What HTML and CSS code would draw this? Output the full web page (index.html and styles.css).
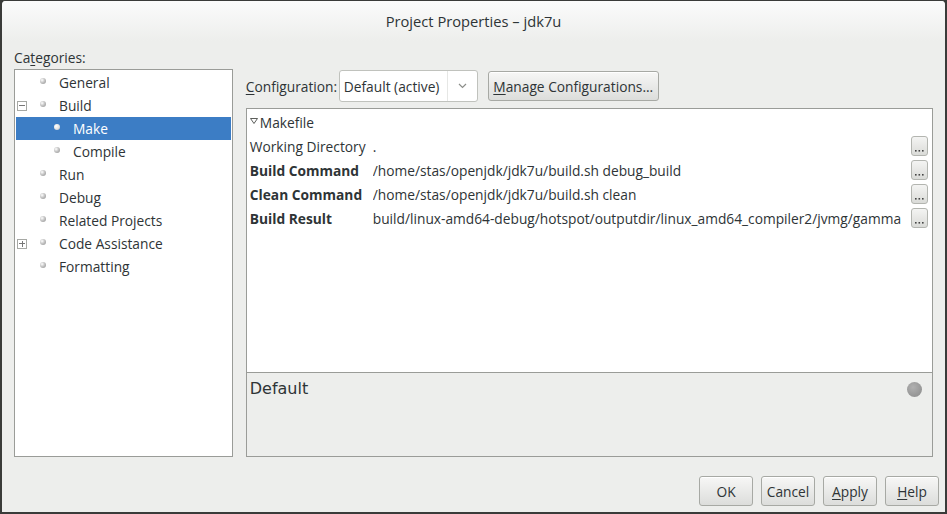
FILE: index.html
```html
<!DOCTYPE html>
<html>
<head>
<meta charset="utf-8">
<link rel="stylesheet" href="styles.css">
</head>
<body>
<div class="window">
  <div class="titlebar">Project Properties – jdk7u</div>
  <div class="main">
    <div class="left">
      <div class="cat-label">Ca<u>t</u>egories:</div>
      <div class="tree">
        <div class="node"><span class="exp"></span><span class="bullet"></span><span class="lbl">General</span></div>
        <div class="node"><span class="exp box minus"></span><span class="bullet"></span><span class="lbl">Build</span></div>
        <div class="node child selected"><span class="exp"></span><span class="bullet"></span><span class="lbl">Make</span></div>
        <div class="node child"><span class="exp"></span><span class="bullet"></span><span class="lbl">Compile</span></div>
        <div class="node"><span class="exp"></span><span class="bullet"></span><span class="lbl">Run</span></div>
        <div class="node"><span class="exp"></span><span class="bullet"></span><span class="lbl">Debug</span></div>
        <div class="node"><span class="exp"></span><span class="bullet"></span><span class="lbl">Related Projects</span></div>
        <div class="node"><span class="exp box plus"></span><span class="bullet"></span><span class="lbl">Code Assistance</span></div>
        <div class="node"><span class="exp"></span><span class="bullet"></span><span class="lbl">Formatting</span></div>
      </div>
    </div>
    <div class="right">
      <div class="configbar">
        <span class="cfg-label"><u>C</u>onfiguration:</span>
        <div class="combo">
          <span class="combo-text">Default (active)</span>
          <span class="combo-arrow"><svg width="9" height="6" viewBox="0 0 9 6"><path d="M1 1l3.5 3.5L8 1" stroke="#8c8e8a" stroke-width="1.2" fill="none"/></svg></span>
        </div>
        <button class="btn manage"><u>M</u>anage Configurations...</button>
      </div>
      <div class="sheet">
        <div class="props">
          <div class="row group"><svg class="tri" width="8" height="6" viewBox="0 0 8 6"><path d="M0.5 0.5h7l-3.5 5z" fill="none" stroke="#4a4c48" stroke-width="0.9"/></svg>Makefile</div>
          <div class="row"><span class="name">Working Directory</span><span class="value">.</span><span class="dots"><svg width="9" height="3" viewBox="0 0 9 3"><rect x="0" y="1" width="1.6" height="1.6" fill="#444"/><rect x="3.5" y="1" width="1.6" height="1.6" fill="#444"/><rect x="7" y="1" width="1.6" height="1.6" fill="#444"/></svg></span></div>
          <div class="row"><span class="name bold">Build Command</span><span class="value">/home/stas/openjdk/jdk7u/build.sh debug_build</span><span class="dots"><svg width="9" height="3" viewBox="0 0 9 3"><rect x="0" y="1" width="1.6" height="1.6" fill="#444"/><rect x="3.5" y="1" width="1.6" height="1.6" fill="#444"/><rect x="7" y="1" width="1.6" height="1.6" fill="#444"/></svg></span></div>
          <div class="row"><span class="name bold">Clean Command</span><span class="value">/home/stas/openjdk/jdk7u/build.sh clean</span><span class="dots"><svg width="9" height="3" viewBox="0 0 9 3"><rect x="0" y="1" width="1.6" height="1.6" fill="#444"/><rect x="3.5" y="1" width="1.6" height="1.6" fill="#444"/><rect x="7" y="1" width="1.6" height="1.6" fill="#444"/></svg></span></div>
          <div class="row"><span class="name bold">Build Result</span><span class="value">build/linux-amd64-debug/hotspot/outputdir/linux_amd64_compiler2/jvmg/gamma</span><span class="dots"><svg width="9" height="3" viewBox="0 0 9 3"><rect x="0" y="1" width="1.6" height="1.6" fill="#444"/><rect x="3.5" y="1" width="1.6" height="1.6" fill="#444"/><rect x="7" y="1" width="1.6" height="1.6" fill="#444"/></svg></span></div>
        </div>
        <div class="desc">
          <span class="desc-title">Default</span>
          <span class="desc-dot"></span>
        </div>
      </div>
    </div>
  </div>
  <div class="footer">
    <button class="btn fbtn">OK</button>
    <button class="btn fbtn">Cancel</button>
    <button class="btn fbtn"><u>A</u>pply</button>
    <button class="btn fbtn"><u>H</u>elp</button>
  </div>
</div>
</body>
</html>
```

FILE: styles.css
```css
* { box-sizing: border-box; }
html, body { margin: 0; padding: 0; }
body {
  width: 947px;
  height: 514px;
  background: #3a3b39;
  font-family: "Open Sans", "Noto Sans", sans-serif;
  font-size: 13.75px;
  color: #2e3436;
}
u { text-decoration: underline; text-underline-offset: 2px; }

.window {
  width: 947px;
  height: 514px;
  border: 2px solid #3a3b39;
  border-top-width: 1px;
  border-radius: 5px 5px 0 0;
  background: #edeeec;
  display: flex;
  flex-direction: column;
  overflow: hidden;
}

.titlebar {
  height: 40px;
  flex: none;
  display: flex;
  align-items: center;
  justify-content: center;
  font-size: 14.7px;
  color: #2e3436;
  background: linear-gradient(#fbfbfb, #edeeec);
  border-radius: 4px 4px 0 0;
}

.main {
  display: flex;
  gap: 13px;
  padding: 9px 12px 0 12px;
  height: 416px;
  flex: none;
}

.left {
  width: 219px;
  display: flex;
  flex-direction: column;
}
.cat-label {
  height: 16px;
  line-height: 16px;
  margin-bottom: 3px;
  white-space: nowrap;
}
.tree {
  flex: 1;
  background: #fff;
  border: 1px solid #9a9c98;
  padding: 1px;
}
.node {
  height: 23px;
  display: flex;
  align-items: center;
}
.node.child { padding-left: 14px; }
.node.selected { background: #3c7dc5; color: #fff; }
.exp {
  width: 10px;
  height: 10px;
  margin-left: 1px;
  flex: none;
  position: relative;
}
.exp.box {
  border: 1px solid #a6a8a4;
  background: #fff;
}
.exp.box::before {
  content: "";
  position: absolute;
  left: 1px; top: 3.5px;
  width: 6px; height: 1px;
  background: #777;
}
.exp.plus::after {
  content: "";
  position: absolute;
  left: 3.5px; top: 1px;
  width: 1px; height: 6px;
  background: #777;
}
.bullet {
  width: 6px;
  height: 6px;
  border-radius: 50%;
  margin-left: 13px;
  margin-top: -3px;
  flex: none;
  background: radial-gradient(circle at 35% 35%, #ffffff 0, #c4c4c4 45%, #8e8e8e 100%);
}
.node.selected .bullet {
  background: radial-gradient(circle at 35% 35%, #ffffff 0, #e6e6e6 50%, #b8b8b8 100%);
}
.lbl { margin-left: 13px; white-space: nowrap; }

.right {
  width: 688px;
  display: flex;
  flex-direction: column;
  padding-top: 20px;
}
.configbar {
  height: 32px;
  display: flex;
  align-items: center;
  flex: none;
}
.cfg-label { width: 93px; white-space: nowrap; }
.combo {
  width: 139px;
  height: 32px;
  background: #fff;
  border: 1px solid #c0c2bd;
  border-radius: 3px;
  display: flex;
  align-items: center;
}
.combo-text { width: 107px; padding-left: 4px; white-space: nowrap; }
.combo-arrow {
  flex: 1;
  height: 100%;
  border-left: 1px solid #e6e7e5;
  display: flex;
  align-items: center;
  justify-content: center;
}

.btn {
  font-family: inherit;
  font-size: 13.75px;
  color: #2e3436;
  background: linear-gradient(#f7f7f6, #dcdddb);
  border: 1px solid #a7a9a4;
  border-radius: 3px;
  box-shadow: inset 0 1px #fff;
  padding: 0;
  display: flex;
  align-items: center;
  justify-content: center;
  white-space: nowrap;
}
.manage {
  margin-left: 10px;
  width: 171px;
  height: 30px;
}

.sheet {
  margin-top: 6px;
  height: 349px;
  border: 1px solid #9a9c98;
  display: flex;
  flex-direction: column;
}
.props {
  flex: 1;
  background: #fff;
  padding: 1px 4px 0 3px;
}
.row {
  height: 24px;
  display: flex;
  align-items: center;
  white-space: nowrap;
}
.row.group .tri { margin: 0 2px 2px 0; }
.name { width: 123px; flex: none; }
.name.bold { font-weight: 700; }
.value { flex: 1; overflow: hidden; }
.dots {
  width: 17px;
  height: 20px;
  flex: none;
  border: 1px solid #b3b5b0;
  border-radius: 3px;
  background: linear-gradient(#f4f4f3, #dadbd8);
  display: flex;
  align-items: flex-end;
  justify-content: center;
  padding-bottom: 3px;
}
.dots svg { display: block; }

.desc {
  height: 84px;
  flex: none;
  border-top: 1px solid #9a9c98;
  background: #edeeec;
  display: flex;
  align-items: flex-start;
  justify-content: space-between;
  padding: 6px 10px 0 3px;
}
.desc-title {
  font-family: "DejaVu Sans", sans-serif;
  font-size: 16px;
  color: #2e3436;
}
.desc-dot {
  width: 15px;
  height: 15px;
  border-radius: 50%;
  margin-top: 3px;
  background: radial-gradient(circle at 40% 35%, #b0b0b0 0, #999 60%, #8c8c8c 100%);
}

.footer {
  flex: 1;
  display: flex;
  justify-content: flex-end;
  align-items: flex-start;
  gap: 8px;
  padding: 19px 6px 0 0;
}
.fbtn {
  width: 54px;
  height: 30px;
}
```
